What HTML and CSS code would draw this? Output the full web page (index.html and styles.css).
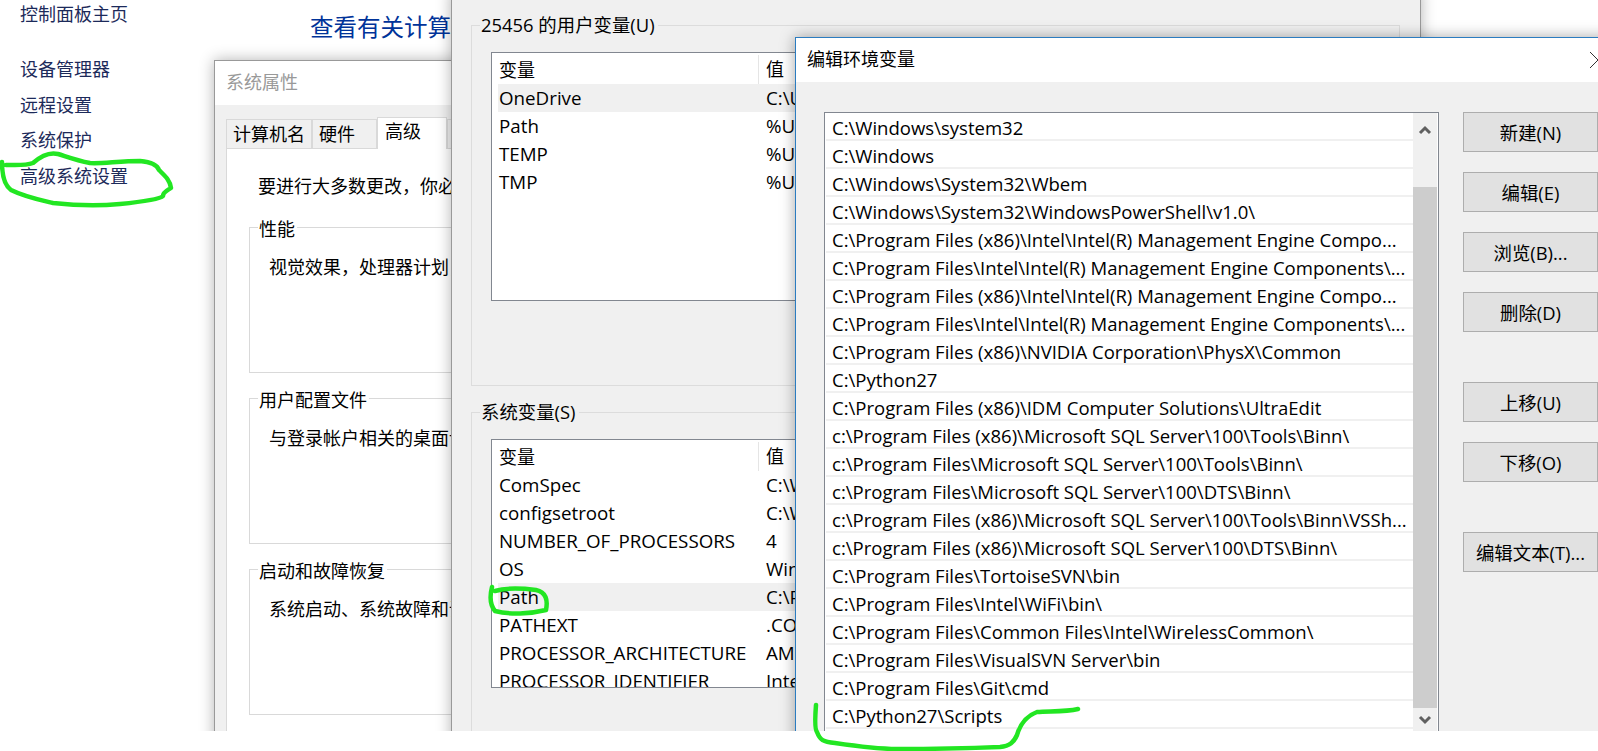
FILE: index.html
```html
<!DOCTYPE html>
<html lang="zh-CN">
<head>
<meta charset="UTF-8" />
<meta name="viewport" content="width=device-width, initial-scale=1" />
<title>编辑环境变量</title>
<link rel="stylesheet" href="styles.css">
</head>
<body>

<div class="desktop">

  <!-- 控制面板 -->
  <nav class="side-nav">
    <a class="nav-home">控制面板主页</a>
    <a>设备管理器</a>
    <a>远程设置</a>
    <a>系统保护</a>
    <a>高级系统设置</a>
  </nav>
  <h1 class="page-title">查看有关计算机的基本信息</h1>

  <!-- 系统属性 -->
  <section class="window win-props">
    <div class="win-title muted">系统属性</div>
    <div class="win-body props-body">
      <div class="tabs">
        <span class="tab">计算机名</span>
        <span class="tab tab-hw">硬件</span>
        <span class="tab active">高级</span>
        <span class="tab">系统保护</span>
      </div>
      <div class="tab-panel">
        <p class="admin-note">要进行大多数更改，你必须作为管理员登录。</p>
        <fieldset class="group">
          <legend>性能</legend>
          <p>视觉效果，处理器计划，内存使用，以及虚拟内存</p>
        </fieldset>
        <fieldset class="group">
          <legend>用户配置文件</legend>
          <p>与登录帐户相关的桌面设置</p>
        </fieldset>
        <fieldset class="group">
          <legend>启动和故障恢复</legend>
          <p>系统启动、系统故障和调试信息</p>
        </fieldset>
      </div>
    </div>
  </section>

  <!-- 环境变量 -->
  <section class="window win-env">
    <fieldset class="var-group user-vars">
      <legend>25456 的用户变量(U)</legend>
      <div class="var-table">
        <div class="var-row var-head"><span>变量</span><span>值</span></div>
        <div class="var-row selected"><span>OneDrive</span><span>C:\Users</span></div>
        <div class="var-row"><span>Path</span><span>%USERPROFILE%</span></div>
        <div class="var-row"><span>TEMP</span><span>%USERPROFILE%</span></div>
        <div class="var-row"><span>TMP</span><span>%USERPROFILE%</span></div>
      </div>
    </fieldset>
    <fieldset class="var-group sys-vars">
      <legend>系统变量(S)</legend>
      <div class="var-table">
        <div class="var-row var-head"><span>变量</span><span>值</span></div>
        <div class="var-row"><span>ComSpec</span><span>C:\Windows</span></div>
        <div class="var-row"><span>configsetroot</span><span>C:\Windows</span></div>
        <div class="var-row"><span>NUMBER_OF_PROCESSORS</span><span>4</span></div>
        <div class="var-row"><span>OS</span><span>Windows_NT</span></div>
        <div class="var-row selected"><span>Path</span><span>C:\Program</span></div>
        <div class="var-row"><span>PATHEXT</span><span>.COM;.EXE</span></div>
        <div class="var-row"><span>PROCESSOR_ARCHITECTURE</span><span>AMD64</span></div>
        <div class="var-row"><span>PROCESSOR_IDENTIFIER</span><span>Intel64</span></div>
      </div>
    </fieldset>
  </section>

  <!-- 编辑环境变量 -->
  <section class="window win-edit">
    <div class="win-title">编辑环境变量<span class="close-x"></span></div>
    <div class="win-body edit-body">
      <div class="path-box">
        <ul class="path-list">
          <li>C:\Windows\system32</li>
          <li>C:\Windows</li>
          <li>C:\Windows\System32\Wbem</li>
          <li>C:\Windows\System32\WindowsPowerShell\v1.0\</li>
          <li>C:\Program Files (x86)\Intel\Intel(R) Management Engine Compo...</li>
          <li>C:\Program Files\Intel\Intel(R) Management Engine Components\...</li>
          <li>C:\Program Files (x86)\Intel\Intel(R) Management Engine Compo...</li>
          <li>C:\Program Files\Intel\Intel(R) Management Engine Components\...</li>
          <li>C:\Program Files (x86)\NVIDIA Corporation\PhysX\Common</li>
          <li>C:\Python27</li>
          <li>C:\Program Files (x86)\IDM Computer Solutions\UltraEdit</li>
          <li>c:\Program Files (x86)\Microsoft SQL Server\100\Tools\Binn\</li>
          <li>c:\Program Files\Microsoft SQL Server\100\Tools\Binn\</li>
          <li>c:\Program Files\Microsoft SQL Server\100\DTS\Binn\</li>
          <li>c:\Program Files (x86)\Microsoft SQL Server\100\Tools\Binn\VSSh...</li>
          <li>c:\Program Files (x86)\Microsoft SQL Server\100\DTS\Binn\</li>
          <li>C:\Program Files\TortoiseSVN\bin</li>
          <li>C:\Program Files\Intel\WiFi\bin\</li>
          <li>C:\Program Files\Common Files\Intel\WirelessCommon\</li>
          <li>C:\Program Files\VisualSVN Server\bin</li>
          <li>C:\Program Files\Git\cmd</li>
          <li>C:\Python27\Scripts</li>
        </ul>
        <div class="scrollbar">
          <svg class="arrow" width="24" height="24" viewBox="0 0 24 24"><path d="M7 20l5-5 5 5" /></svg>
          <div class="thumb"></div>
          <svg class="arrow" width="24" height="23" viewBox="0 0 24 23"><path d="M7 9l5 5 5-5" /></svg>
        </div>
      </div>
      <div class="btn-col">
        <button type="button">新建(N)</button>
        <button type="button">编辑(E)</button>
        <button type="button">浏览(B)...</button>
        <button type="button">删除(D)</button>
        <button type="button" class="gap-top">上移(U)</button>
        <button type="button">下移(O)</button>
        <button type="button" class="gap-top">编辑文本(T)...</button>
      </div>
    </div>
  </section>

</div>

<!-- 绿色标记 -->
<svg class="marks" width="1598" height="751" viewBox="0 0 1598 751">
  <path d="M2 162C2 175 4 185 11 190C25 197 40 200 53 203C80 206 100 206 120 204C140 202 160 199 163 196C163 192 168 190 171 188C170 180 165 176 159 170C157 164 150 162 140 161C120 161 100 164 90 163C75 160 65 156 58 154C50 152 42 155 33 163C25 166 15 165 6 165" />
  <path d="M492 587C490 595 490 605 495 611C510 615 530 614 546 610C548 600 546 592 536 590C520 588 505 588 495 591" />
  <path d="M816 705C815 718 815 730 817 732C820 740 823 742 835 743C855 746 875 749 897 749C930 749 975 748 1000 747C1010 746 1014 742 1017 735C1020 725 1026 716 1037 712C1050 711 1065 712 1078 709" />
</svg>

</body>
</html>
```

FILE: styles.css
```css
* {
  box-sizing: border-box;
}
body {
  margin: 0;
  background: #fff;
  color: #000;
  font-family: 'Open Sans', 'Noto Sans CJK SC', sans-serif;
  font-size: 17px;
}
.desktop {
  position: relative;
  width: 1598px;
  height: 731px;
  overflow: hidden;
}
p {
  margin: 0;
}

/* control panel */
.side-nav {
  position: absolute;
  left: 20px;
  top: 0;
  display: flex;
  flex-direction: column;
  font-size: 18px;
  color: #1c2a5a;
}
.side-nav a {
  height: 35.5px;
  line-height: 35.5px;
  white-space: nowrap;
}
.side-nav .nav-home {
  height: 52px;
  line-height: 28px;
}
.page-title {
  position: absolute;
  left: 310px;
  top: 9px;
  margin: 0;
  font-size: 23.5px;
  line-height: 36px;
  font-weight: 400;
  color: #003399;
  white-space: nowrap;
}

/* windows */
.window {
  position: absolute;
  background: #f0f0f0;
}
.win-title {
  height: 44px;
  padding-left: 11px;
  background: #fff;
  font-size: 18px;
  line-height: 43px;
  position: relative;
}
.win-title.muted {
  color: #999;
}
.win-props {
  left: 214px;
  top: 60px;
  width: 400px;
  height: 700px;
  border: 1px solid #999;
  box-shadow: 0 0 14px rgba(0, 0, 0, 0.3);
}
.props-body {
  padding: 13px 0 0 11px;
}
.tabs {
  display: flex;
  height: 30px;
  align-items: flex-end;
  font-size: 18px;
  line-height: 29px;
}
.tab {
  height: 29px;
  padding: 0 6px;
  border: 1px solid #d9d9d9;
  border-bottom: 0;
  white-space: nowrap;
}
.tab-hw {
  width: 65px;
}
.tab.active {
  width: 70px;
  height: 32px;
  margin-bottom: -1px;
  background: #fff;
  padding-left: 7px;
  line-height: 26px;
  position: relative;
}
.tab-panel {
  height: 640px;
  padding: 23px 0 0 22px;
  background: #fff;
  border: 1px solid #d9d9d9;
  font-size: 18px;
  line-height: 28px;
}
.admin-note {
  padding-left: 9px;
  height: 39px;
  white-space: nowrap;
}
.group {
  margin: 0 0 9px;
  padding: 10px 0 0 19px;
  height: 162px;
  width: 500px;
  border: 1px solid #d9d9d9;
  white-space: nowrap;
}
.group legend {
  margin-left: -11px;
  padding: 4px 2px 0 1px;
}

/* environment variables */
.win-env {
  left: 451px;
  top: -10px;
  width: 970px;
  height: 760px;
  border-left: 1px solid #999;
  border-right: 1px solid #999;
  box-shadow: 0 0 14px rgba(0, 0, 0, 0.3);
  padding: 21px 20px 0 19px;
}
.var-group {
  margin: 0;
  padding: 13px 0 0 19px;
  border: 1px solid #dcdcdc;
  font-size: 18.75px;
}
.var-group legend {
  margin-left: -11px;
  padding: 0 3px 0 1px;
  font-size: 18.4px;
  line-height: 28px;
}
.user-vars {
  height: 375px;
  margin-bottom: 12px;
}
.sys-vars {
  height: 400px;
}
.var-table {
  width: 900px;
  height: 249px;
  padding-left: 6px;
  border: 1px solid #828790;
  background: #fff;
  overflow: hidden;
}
.var-row {
  display: flex;
  height: 28px;
  line-height: 28px;
  white-space: nowrap;
}
.var-row span:first-child {
  width: 261px;
  padding-left: 1px;
  flex: none;
}
.var-row span:last-child {
  padding-left: 7px;
}
.var-row.selected {
  background: #f0f0f0;
}
.var-head {
  height: 31px;
  font-size: 18px;
}
.var-head span:first-child {
  border-right: 1px solid #e5e5e5;
  height: 29px;
  margin-top: 2px;
  line-height: 30px;
}
.var-head span:last-child {
  line-height: 33px;
}

/* edit dialog */
.win-edit {
  left: 795px;
  top: 37px;
  width: 900px;
  height: 720px;
  border-left: 1px solid #2b7cc0;
  border-top: 1px solid #2b7cc0;
  box-shadow: 0 0 14px rgba(0, 0, 0, 0.35);
}
.close-x {
  position: absolute;
  left: 794px;
  top: 14px;
  width: 16px;
  height: 16px;
  background:
    linear-gradient(45deg, transparent 47%, #333 47%, #333 53%, transparent 53%),
    linear-gradient(-45deg, transparent 47%, #333 47%, #333 53%, transparent 53%);
}
.edit-body {
  display: flex;
  align-items: flex-start;
  gap: 24px;
  padding: 30px 0 0 28px;
}
.path-box {
  display: flex;
  width: 615px;
  height: 630px;
  padding-right: 1px;
  background: #fff;
  border: 1px solid #828790;
}
.path-list {
  flex: 1;
  margin: 0;
  padding: 0 0 0 1px;
  list-style: none;
  font-size: 18.55px;
}
.path-list li {
  height: 28px;
  padding: 1px 0 0 6px;
  line-height: 27px;
  border-bottom: 2px solid #f0f0f0;
  white-space: nowrap;
  overflow: hidden;
}
.scrollbar {
  display: flex;
  flex-direction: column;
  width: 24px;
  height: 618px;
  background: #f0f0f0;
}
.thumb {
  height: 521px;
  margin-top: 50px;
  background: #cdcdcd;
}
.arrow {
  flex: none;
}
.arrow path {
  fill: none;
  stroke: #606060;
  stroke-width: 3;
}
.btn-col {
  display: flex;
  flex-direction: column;
  gap: 20px;
}
.btn-col button {
  width: 135px;
  height: 40px;
  padding: 0;
  background: #e1e1e1;
  border: 1.5px solid #adadad;
  font: inherit;
  font-size: 18.4px;
  color: #000;
}
.btn-col .gap-top {
  margin-top: 30px;
}

/* green marks */
.marks {
  position: absolute;
  left: 0;
  top: 0;
}
.marks path {
  fill: none;
  stroke: #22e622;
  stroke-width: 4.5;
  stroke-linecap: round;
  stroke-linejoin: round;
}
```
